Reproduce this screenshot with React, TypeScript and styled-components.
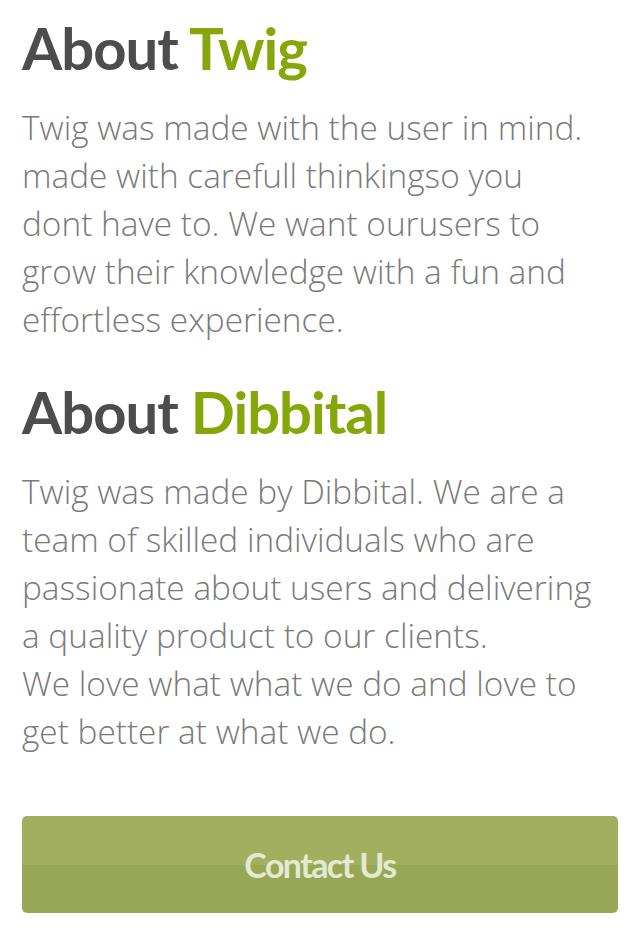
import React from "react";
import styled, { createGlobalStyle } from "styled-components";

const Global = createGlobalStyle`
  html, body { margin: 0; padding: 0; background: #ffffff; }
  body { -webkit-font-smoothing: antialiased; }
`;

const Page = styled.main`
  padding: 16px 23px 30px 22px;
  display: flex;
  flex-direction: column;
`;

const Heading = styled.h1<{ $top?: number }>`
  margin: ${(p) => p.$top ?? 0}px 0 0 0;
  font-family: Lato, "Open Sans", sans-serif;
  font-weight: 700;
  font-size: 58px;
  line-height: 64px;
  letter-spacing: -1px;
  color: #4d4d4d;
`;

const Accent = styled.span`
  color: #86a70a;
`;

const Body = styled.p`
  margin: 23px 0 0 0;
  max-width: 575px;
  font-family: "Open Sans", Lato, sans-serif;
  font-weight: 300;
  font-size: 33.4px;
  line-height: 48px;
  color: #7a7a7a;
`;

const ContactButton = styled.button`
  margin-top: 61px;
  width: 596px;
  height: 97px;
  padding: 0;
  border: none;
  border-radius: 5px;
  background: linear-gradient(to bottom, #a2af5e 0, #a2af5e 51%, #97a755 51%, #97a755 100%);
  color: #e4e9d2;
  font-family: Lato, "Open Sans", sans-serif;
  font-weight: 700;
  font-size: 34px;
  letter-spacing: -1.6px;
  cursor: pointer;
`;

export default function App() {
  return (
    <>
      <Global />
      <Page>
        <Heading>
          About <Accent>Twig</Accent>
        </Heading>
        <Body>
          Twig was made with the user in mind. made with carefull thinkingso you dont have to. We want
          ourusers to grow their knowledge with a fun and effortless experience.
        </Body>
        <Heading $top={37}>
          About <Accent>Dibbital</Accent>
        </Heading>
        <Body>
          Twig was made by Dibbital. We are a team of skilled individuals who are passionate about users
          and delivering a quality product to our clients.
          <br />
          We love what what we do and love to get better at what we do.
        </Body>
        <ContactButton>Contact Us</ContactButton>
      </Page>
    </>
  );
}
